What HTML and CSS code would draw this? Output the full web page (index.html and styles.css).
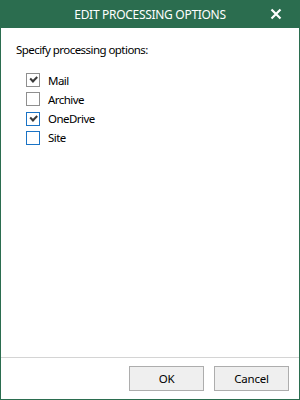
FILE: index.html
```html
<!DOCTYPE html>
<html lang="en">
<head>
    <meta charset="UTF-8">
    <meta name="viewport" content="width=device-width, initial-scale=1.0">
    <title>Edit Processing Options</title>
    <link rel="stylesheet" href="styles.css">
</head>
<body>

<div class="dialog">
    <div class="title-bar">
        <span class="title">EDIT PROCESSING OPTIONS</span>
        <span class="close-button">
            <svg width="12" height="12" viewBox="0 0 12 12">
                <path d="M1.5 1.5 L10.5 10.5 M10.5 1.5 L1.5 10.5" stroke="#fff" stroke-width="2.2" fill="none"/>
            </svg>
        </span>
    </div>
    <div class="content">
        <p class="intro">Specify processing options:</p>
        <div class="option-list">
            <label class="option">
                <span class="box checked"></span>
                <span>Mail</span>
            </label>
            <label class="option">
                <span class="box"></span>
                <span>Archive</span>
            </label>
            <label class="option">
                <span class="box checked focus"></span>
                <span>OneDrive</span>
            </label>
            <label class="option">
                <span class="box focus"></span>
                <span>Site</span>
            </label>
        </div>
    </div>
    <div class="footer">
        <button class="button">OK</button>
        <button class="button">Cancel</button>
    </div>
</div>

</body>
</html>
```

FILE: styles.css
```css
body {
    margin: 0;
    font-family: "Noto Sans", "Open Sans", sans-serif;
    font-size: 11.5px;
    letter-spacing: -0.55px;
    color: #000;
    background: #fff;
}
.dialog {
    width: 300px;
    height: 400px;
    box-sizing: border-box;
    border: 1px solid #2b6d4f;
    border-top: none;
    display: flex;
    flex-direction: column;
}
.title-bar {
    height: 28px;
    background-color: #2b6d4f;
    color: #fff;
    display: flex;
    align-items: center;
    justify-content: center;
    position: relative;
    margin: 0 -1px;
}
.title {
    font-size: 12px;
    letter-spacing: -0.3px;
}
.close-button {
    position: absolute;
    right: 18px;
    top: 8px;
    width: 12px;
    height: 12px;
}
.close-button svg {
    display: block;
}
.content {
    flex: 1;
    padding: 13px 15px;
}
.intro {
    margin: 0 0 14px;
    line-height: 18px;
}
.option-list {
    display: flex;
    flex-direction: column;
    gap: 5.3px;
    padding-left: 10px;
}
.option {
    display: flex;
    align-items: center;
    gap: 8px;
    height: 14px;
}
.box {
    width: 12px;
    height: 12px;
    border: 1px solid #8f8f8f;
    background: #fff;
    position: relative;
}
.box.focus {
    border-color: #1a73c5;
}
.box.checked::after {
    content: "";
    position: absolute;
    left: 3px;
    top: 2px;
    width: 5px;
    height: 2.5px;
    border-left: 2.5px solid #3a3a3a;
    border-bottom: 2.5px solid #3a3a3a;
    transform: rotate(-45deg);
}
.footer {
    border-top: 1px solid #d4d4d4;
    height: 41px;
    display: flex;
    justify-content: flex-end;
    align-items: center;
    gap: 10px;
    padding: 0 10px 0 0;
}
.button {
    width: 75px;
    height: 25px;
    font-family: inherit;
    font-size: 11.5px;
    letter-spacing: -0.2px;
    background: #efefef;
    border: 1px solid #adadad;
    color: #000;
    padding: 0;
}
```
